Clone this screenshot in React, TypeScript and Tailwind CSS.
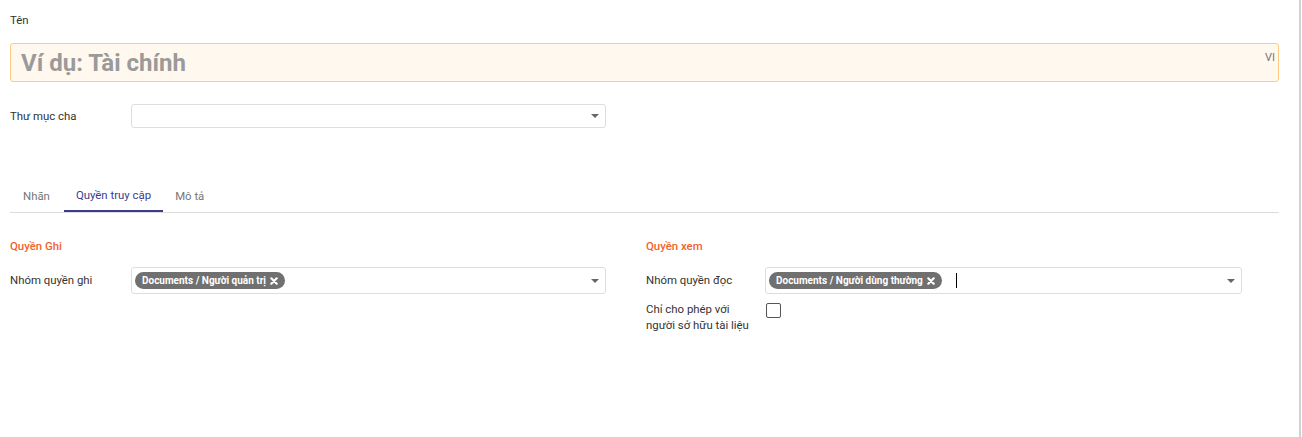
import React from 'react';

const Caret: React.FC = () => (
  <span className="ml-auto w-0 h-0 border-l-[4px] border-r-[4px] border-t-[4px] border-l-transparent border-r-transparent border-t-[#666]" />
);

interface TagProps {
  label: string;
}

const Tag: React.FC<TagProps> = ({ label }) => (
  <span className="inline-flex items-center gap-[3px] h-[17px] px-[7px] rounded-full bg-[#707070] text-white text-[10px] font-bold leading-none whitespace-nowrap">
    {label}
    <svg width="8" height="8" viewBox="0 0 8 8" className="ml-[1px]">
      <path d="M1.3 1.3 L6.7 6.7 M6.7 1.3 L1.3 6.7" stroke="white" strokeWidth="2.2" strokeLinecap="round" />
    </svg>
  </span>
);

interface ManyProps {
  tag: string;
  cursor?: boolean;
}

const ManyField: React.FC<ManyProps> = ({ tag, cursor }) => (
  <div className="flex items-center h-[27px] pl-[3px] pr-[6px] border border-[#dedede] rounded-[3px] bg-white">
    <Tag label={tag} />
    {cursor && <span className="ml-[14px] w-px h-[15px] bg-black" />}
    <Caret />
  </div>
);

const App: React.FC = () => {
  const tabs = ['Nhãn', 'Quyền truy cập', 'Mô tả'];
  return (
    <div className="flex w-[1302px] h-[437px] bg-white text-[11.4px] text-[#333]" style={{ fontFamily: 'Roboto, "Noto Sans", sans-serif' }}>
      <div className="w-[1299px] pl-[10px] pr-[20px]">
        <div className="mt-[13px] h-[14px] leading-[14px]">Tên</div>

        <div className="relative mt-[16px] h-[39px] flex items-center px-[10px] bg-[#fff8ee] border border-[#ffcb80] rounded-[3px]">
          <span className="text-[24px] font-bold text-[#9a9a9a]">Ví dụ: Tài chính</span>
          <span className="absolute right-[3px] top-[6px] text-[11px] text-[#777]">VI</span>
        </div>

        <div className="mt-[22px] grid grid-cols-[121px_475px] items-center">
          <span className="pt-[1px]">Thư mục cha</span>
          <div className="flex items-center h-[24px] px-[6px] border border-[#dedede] rounded-[3px]">
            <Caret />
          </div>
        </div>

        <div className="mt-[53px] flex border-b border-[#dcdcdc]">
          {tabs.map((t, i) => (
            <div
              key={t}
              className={`h-[31px] pt-[1px] flex items-center ${i === 0 ? 'pl-[13px] pr-[14px]' : 'px-[12px]'} ${i === 1 ? 'text-[#3d3b8e] border-b-2 border-[#3d3b8e] -mb-px' : 'text-[#777]'}`}
            >
              {t}
            </div>
          ))}
        </div>

        <div className="mt-[26px] grid grid-cols-[596px_596px] gap-x-[40px]">
          <div>
            <div className="h-[14px] leading-[14px] text-[#f0642d] font-medium">Quyền Ghi</div>
            <div className="mt-[14px] grid grid-cols-[121px_475px] items-center">
              <span>Nhóm quyền ghi</span>
              <ManyField tag="Documents / Người quản trị" />
            </div>
          </div>
          <div>
            <div className="h-[14px] leading-[14px] text-[#f0642d] font-medium">Quyền xem</div>
            <div className="mt-[14px] grid grid-cols-[119px_477px] items-center">
              <span>Nhóm quyền đọc</span>
              <ManyField tag="Documents / Người dùng thường" cursor />
            </div>
            <div className="mt-[7px] grid grid-cols-[120px_476px] items-start">
              <span className="leading-[16px] pr-[14px]">Chỉ cho phép với người sở hữu tài liệu</span>
              <span className="mt-[2px] w-[15px] h-[15px] border border-[#555] rounded-[2px] bg-white" />
            </div>
          </div>
        </div>
      </div>
      <div className="w-[2px] h-full bg-[#cdd1da]" />
    </div>
  );
};

export default App;
